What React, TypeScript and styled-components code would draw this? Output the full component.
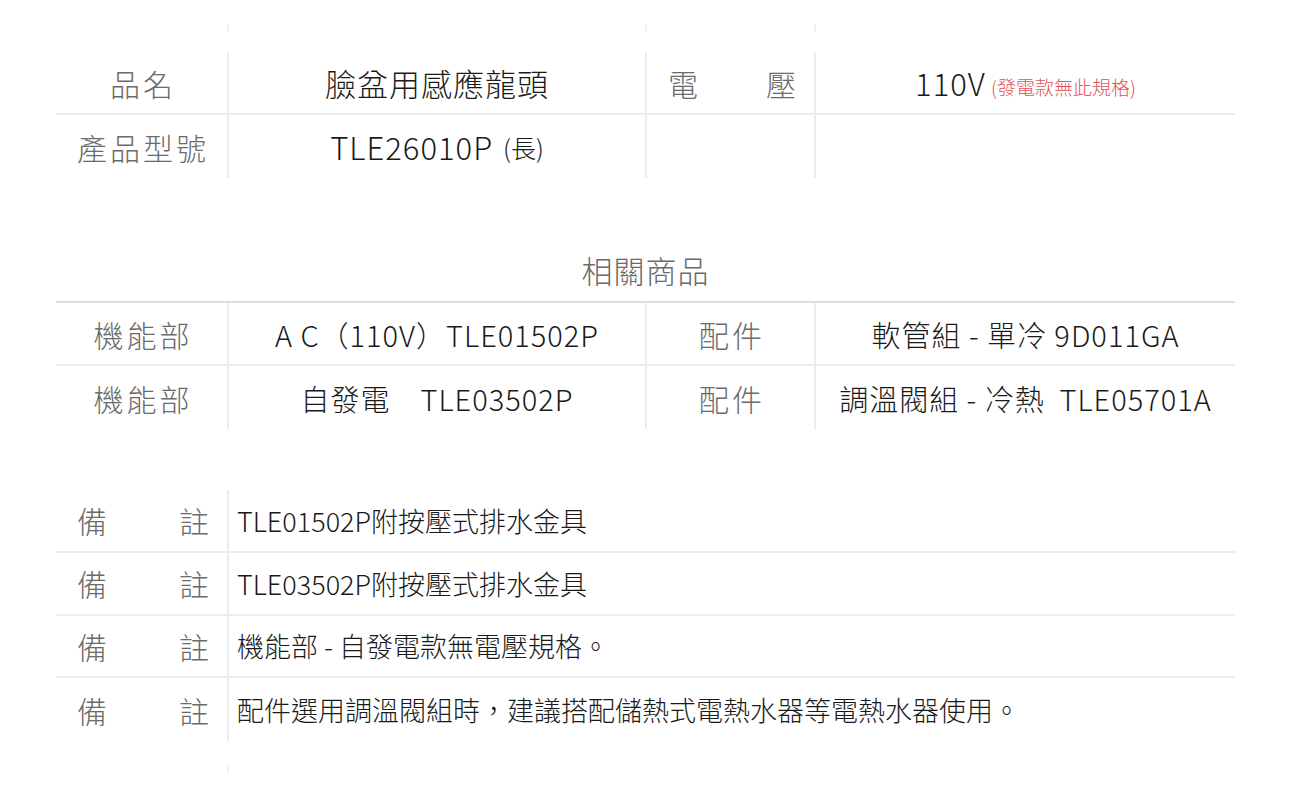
import React from 'react';
import styled, {createGlobalStyle} from "styled-components";

const GlobalStyle = createGlobalStyle`
    body {
        margin: 0;
        background: #fff;
        font-family: "Noto Sans CJK TC", "Noto Sans", sans-serif;
        font-weight: 300;
    }
`

const relatedRows = [
    {label: "機能部", value: "A C（110V）TLE01502P", label2: "配件", value2: "軟管組 - 單冷 9D011GA"},
    {label: "機能部", value: "自發電　TLE03502P", label2: "配件", value2: "調溫閥組 - 冷熱\u00a0\u00a0TLE05701A"},
]

const notes = [
    "TLE01502P附按壓式排水金具",
    "TLE03502P附按壓式排水金具",
    "機能部 - 自發電款無電壓規格。",
    "配件選用調溫閥組時，建議搭配儲熱式電熱水器等電熱水器使用。",
]

const Spread = ({text}: {text: string}) => (
    <>
        {text.split("").map((ch, i) => <span key={i}>{ch}</span>)}
    </>
)

export default function App() {
    const specRows = [
        {label: "品名", value: <>臉盆用感應龍頭</>, label2: "電壓", value2: <>110V<Note>(發電款無此規格)</Note></>},
        {label: "產品型號", value: <>TLE26010P <Small>(長)</Small></>, label2: "", value2: null},
    ]

    return (
        <Page>
            <GlobalStyle/>
            <Stub>
                <span/>
                <StubLine/>
                <StubLine/>
                <StubLine/>
            </Stub>

            <Table>
                {specRows.map((r, i) => (
                    <Row key={i}>
                        <Label>{r.label}</Label>
                        <Value>{r.value}</Value>
                        <Label $spread={r.label2.length === 2}>
                            {r.label2.length === 2 ? <Spread text={r.label2}/> : r.label2}
                        </Label>
                        <Value>{r.value2}</Value>
                    </Row>
                ))}
            </Table>

            <Heading>相關商品</Heading>
            <Table>
                {relatedRows.map((r, i) => (
                    <Row key={i}>
                        <Label>{r.label}</Label>
                        <Value $size={29}>{r.value}</Value>
                        <Label>{r.label2}</Label>
                        <Value $size={29}>{r.value2}</Value>
                    </Row>
                ))}
            </Table>

            <NotesTable>
                {notes.map((n, i) => (
                    <NoteRow key={i}>
                        <Label $spread><Spread text="備註"/></Label>
                        <NoteText>{n}</NoteText>
                    </NoteRow>
                ))}
            </NotesTable>

            <BottomStub>
                <span/>
                <StubLine/>
            </BottomStub>
        </Page>
    );
}

const Page = styled.div`
    width: 1179px;
    margin: 0 auto;
    padding: 24px 0 40px;
    box-sizing: border-box;
`

const Stub = styled.div`
    display: grid;
    grid-template-columns: 171px 418px 169px 1fr;
    height: 8px;
    margin-bottom: 20px;
`

const BottomStub = styled(Stub)`
    grid-template-columns: 171px 1fr;
    height: 7px;
    margin: 24px 0 0;
`

const StubLine = styled.span`
    border-left: 2px solid #f0f0f0;
`

const Table = styled.div`
    display: flex;
    flex-direction: column;
`

const Row = styled.div`
    display: grid;
    grid-template-columns: 171px 418px 169px 1fr;
    height: 63px;
    box-sizing: border-box;

    &:not(:last-child) {
        border-bottom: 2px solid #ececec;
    }

    & > *:not(:first-child) {
        border-left: 2px solid #ececec;
    }
`

const Label = styled.div<{ $spread?: boolean }>`
    display: flex;
    align-items: center;
    justify-content: ${p => p.$spread ? "space-between" : "center"};
    padding: ${p => p.$spread ? "0 18px 0 21px" : "0 0 0 3px"};
    font-size: 30px;
    color: #6b6b6b;
    letter-spacing: ${p => p.$spread ? "0" : "3px"};
`

const Value = styled.div<{ $size?: number }>`
    display: flex;
    align-items: center;
    justify-content: center;
    font-size: ${p => p.$size ?? 31}px;
    color: #1a1a1a;
    letter-spacing: 1px;
    white-space: pre;
`

const Note = styled.span`
    font-size: 19px;
    color: #e4505a;
    letter-spacing: 0;
    margin-left: 5px;
    margin-top: 8px;
`

const Small = styled.span`
    font-size: 25px;
    letter-spacing: 0;
    margin-left: 2px;
`

const Heading = styled.div`
    display: flex;
    align-items: center;
    justify-content: center;
    height: 63px;
    margin-top: 60px;
    border-bottom: 2px solid #dddddd;
    font-size: 31px;
    color: #6b6b6b;
    letter-spacing: 1px;
`

const NotesTable = styled(Table)`
    margin-top: 61px;
`

const NoteRow = styled(Row)`
    grid-template-columns: 171px 1fr;
    height: 62.75px;
`

const NoteText = styled.div`
    display: flex;
    align-items: center;
    padding-left: 8px;
    font-size: 27px;
    color: #1a1a1a;
`
